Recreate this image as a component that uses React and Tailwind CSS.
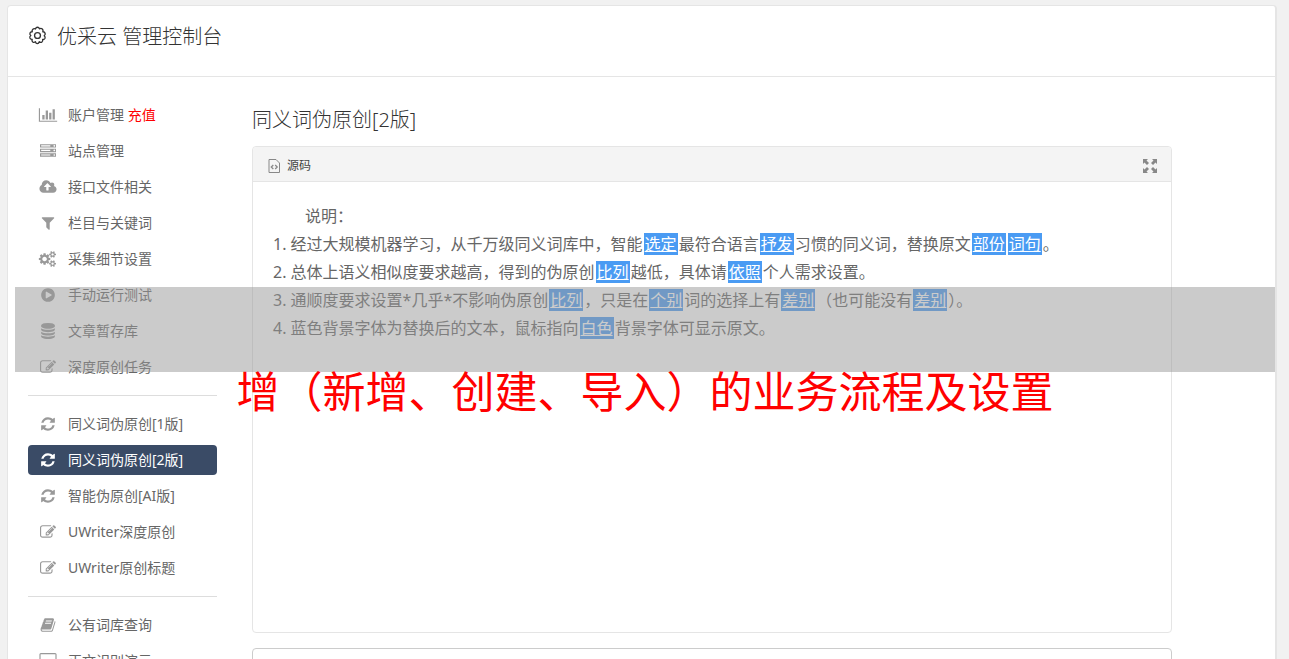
import React from 'react';

// Icon outlines, drawn on a 1792 unit em
const icons = {
  chart: { box: '0 0 2048 1792', d: 'M640 896v512h-256v-512h256zm384-512v1024h-256v-1024h256zm1024 1152v128h-2048v-1536h128v1408h1920zm-640-896v768h-256v-768h256zm384-384v1152h-256v-1152h256z' },
  server: { box: '0 0 1792 1792', d: 'M128 1408h1024v-128h-1024v128zm0-512h1024v-128h-1024v128zm1568 448q0-40-28-68t-68-28-68 28-28 68 28 68 68 28 68-28 28-68zm-1568-960h1024v-128h-1024v128zm1568 448q0-40-28-68t-68-28-68 28-28 68 28 68 68 28 68-28 28-68zm0-512q0-40-28-68t-68-28-68 28-28 68 28 68 68 28 68-28 28-68zm96 832v384h-1792v-384h1792zm0-512v384h-1792v-384h1792zm0-512v384h-1792v-384h1792z' },
  cloud: { box: '-64 0 1920 1792', d: 'M1216 864q0-14-9-23l-352-352q-9-9-23-9t-23 9l-351 351q-10 12-10 24 0 14 9 23t23 9h224v352q0 13 9.5 22.5t22.5 9.5h192q13 0 22.5-9.5t9.5-22.5v-352h224q13 0 22.5-9.5t9.5-22.5zm640 288q0 159-112.5 271.5t-271.5 112.5h-1088q-185 0-316.5-131.5t-131.5-316.5q0-130 70-240t188-165q-2-30-2-43 0-212 150-362t362-150q156 0 285.5 87t188.5 231q71-62 166-62 106 0 181 75t75 181q0 76-41 138 130 31 213.5 135.5t83.5 238.5z' },
  filter: { box: '0 0 1792 1792', d: 'M1595 295q17 41-14 70l-493 493v742q0 42-39 59-13 5-25 5-27 0-45-19l-256-256q-19-19-19-45v-486l-493-493q-31-29-14-70 17-39 59-39h1280q42 0 59 39z' },
  cogs: { box: '0 0 1920 1792', d: 'M832 896q0-106-75-181t-181-75-181 75-75 181 75 181 181 75 181-75 75-181zm768 512q0-52-38-90t-90-38-90 38-38 90q0 53 37.5 90.5t90.5 37.5 90.5-37.5 37.5-90.5zm0-1024q0-52-38-90t-90-38-90 38-38 90q0 53 37.5 90.5t90.5 37.5 90.5-37.5 37.5-90.5zm-384 421v185q0 10-7 19.5t-16 10.5l-155 24q-11 35-32 76 34 48 90 115 7 11 7 20 0 12-7 19-23 30-82.5 89.5t-78.5 59.5q-11 0-21-7l-115-90q-37 19-77 31-11 108-23 155-7 24-30 24h-186q-11 0-20-7.5t-10-17.5l-23-153q-34-10-75-31l-118 89q-7 7-20 7-11 0-21-8-144-133-144-160 0-9 7-19 10-14 41-53t47-61q-23-44-35-82l-152-24q-10-1-17-9.5t-7-19.5v-185q0-10 7-19.5t16-10.5l155-24q11-35 32-76-34-48-90-115-7-11-7-20 0-12 7-20 22-30 82-89t79-59q11 0 21 7l115 90q34-18 77-32 11-108 23-154 7-24 30-24h186q11 0 20 7.5t10 17.5l23 153q34 10 75 31l118-89q8-7 20-7 11 0 21 8 144 133 144 160 0 8-7 19-12 16-42 54t-45 60q23 48 34 82l152 23q10 2 17 10.5t7 19.5zm640 533v140q0 16-149 31-12 27-30 52 51 113 51 138 0 4-4 7-122 71-124 71-8 0-46-47t-52-68q-20 2-30 2t-30-2q-14 21-52 68t-46 47q-2 0-124-71-4-3-4-7 0-25 51-138-18-25-30-52-149-15-149-31v-140q0-16 149-31 13-29 30-52-51-113-51-138 0-4 4-7 4-2 35-20t59-34 30-16q8 0 46 46.5t52 67.5q20-2 30-2t30 2q51-71 92-112l6-2q4 0 124 70 4 3 4 7 0 25-51 138 17 23 30 52 149 15 149 31zm0-1024v140q0 16-149 31-12 27-30 52 51 113 51 138 0 4-4 7-122 71-124 71-8 0-46-47t-52-68q-20 2-30 2t-30-2q-14 21-52 68t-46 47q-2 0-124-71-4-3-4-7 0-25 51-138-18-25-30-52-149-15-149-31v-140q0-16 149-31 13-29 30-52-51-113-51-138 0-4 4-7 4-2 35-20t59-34 30-16q8 0 46 46.5t52 67.5q20-2 30-2t30 2q51-71 92-112l6-2q4 0 124 70 4 3 4 7 0 25-51 138 17 23 30 52 149 15 149 31z' },
  play: { box: '0 0 1792 1792', d: 'M896 128q209 0 385.5 103t279.5 279.5 103 385.5-103 385.5-279.5 279.5-385.5 103-385.5-103-279.5-279.5-103-385.5 103-385.5 279.5-279.5 385.5-103zm384 823q32-18 32-55t-32-55l-544-320q-31-19-64-1-32 19-32 56v640q0 37 32 56 16 8 32 8 17 0 32-9z' },
  database: { box: '0 0 1792 1792', d: 'M896 768q237 0 443-43t325-127v170q0 69-103 128t-280 93.5-385 34.5-385-34.5-280-93.5-103-128v-170q119 84 325 127t443 43zm0 768q237 0 443-43t325-127v170q0 69-103 128t-280 93.5-385 34.5-385-34.5-280-93.5-103-128v-170q119 84 325 127t443 43zm0-384q237 0 443-43t325-127v170q0 69-103 128t-280 93.5-385 34.5-385-34.5-280-93.5-103-128v-170q119 84 325 127t443 43zm0-1152q208 0 385 34.5t280 93.5 103 128v128q0 69-103 128t-280 93.5-385 34.5-385-34.5-280-93.5-103-128v-128q0-69 103-128t280-93.5 385-34.5z' },
  edit: { box: '0 0 1792 1792', d: 'M888 1184l116-116-152-152-116 116v56h96v96h56zm440-720q-16-16-33 1l-350 350q-17 17-1 33t33-1l350-350q17-17 1-33zm80 594v190q0 119-84.5 203.5t-203.5 84.5h-832q-119 0-203.5-84.5t-84.5-203.5v-832q0-119 84.5-203.5t203.5-84.5h832q63 0 117 25 15 7 18 23 3 17-9 29l-49 49q-14 14-32 8-23-6-45-6h-832q-66 0-113 47t-47 113v832q0 66 47 113t113 47h832q66 0 113-47t47-113v-126q0-13 9-22l64-64q15-15 35-7t20 29zm-96-738l288 288-672 672h-288v-288zm444 132l-92 92-288-288 92-92q28-28 68-28t68 28l152 152q28 28 28 68t-28 68z' },
  refresh: { box: '0 0 1792 1792', d: 'M1639 1056q0 5-1 7-64 268-268 434.5t-478 166.5q-146 0-282.5-55t-243.5-157l-129 129q-19 19-45 19t-45-19-19-45v-448q0-26 19-45t45-19h448q26 0 45 19t19 45-19 45l-137 137q71 66 161 102t187 36q134 0 250-65t186-179q11-17 53-117 8-23 30-23h192q13 0 22.5 9.5t9.5 22.5zm25-800v448q0 26-19 45t-45 19h-448q-26 0-45-19t-19-45 19-45l138-138q-148-137-349-137-134 0-250 65t-186 179q-11 17-53 117-8 23-30 23h-199q-13 0-22.5-9.5t-9.5-22.5v-7q65-268 270-434.5t480-166.5q146 0 284 55.5t245 156.5l130-129q19-19 45-19t45 19 19 45z' },
  book: { box: '0 0 1792 1792', d: 'M1703 478q40 57 18 129l-275 906q-19 64-76.5 107.5t-122.5 43.5h-923q-77 0-148.5-53.5t-99.5-131.5q-24-67-2-127 0-4 3-27t4-37q1-8-3-21.5t-3-19.5q2-11 8-21t16.5-23.5 16.5-23.5q23-38 45-91.5t30-91.5q3-10 .5-30t-.5-28q3-11 17-28t17-23q21-36 42-92t25-90q1-9-2.5-32t.5-28q4-13 22-30.5t22-22.5q19-26 42.5-84.5t27.5-96.5q1-8-3-25.5t-2-26.5q2-8 9-18t18-23 17-21q8-12 16.5-30.5t15-35 16-36 19.5-32 26.5-23.5 36-11.5 47.5 5.5l-1 3q38-9 51-9h761q74 0 114 56t18 130l-274 906q-36 119-71.5 153.5t-128.5 34.5h-869q-27 0-38 15-11 16-1 43 24 70 144 70h923q29 0 56-15.5t35-41.5l300-987q7-22 5-57 38 15 59 43zm-1064 2q-4 13 2 22.5t20 9.5h608q13 0 25.5-9.5t16.5-22.5l21-64q4-13-2-22.5t-20-9.5h-608q-13 0-25.5 9.5t-16.5 22.5zm-83 256q-4 13 2 22.5t20 9.5h608q13 0 25.5-9.5t16.5-22.5l21-64q4-13-2-22.5t-20-9.5h-608q-13 0-25.5 9.5t-16.5 22.5z' },
  desktop: { box: '-64 0 1920 1792', d: 'M1728 992v-832q0-13-9.5-22.5t-22.5-9.5h-1600q-13 0-22.5 9.5t-9.5 22.5v832q0 13 9.5 22.5t22.5 9.5h1600q13 0 22.5-9.5t9.5-22.5zm128-832v1088q0 66-47 113t-113 47h-544q0 37 16 77.5t32 71 16 43.5q0 26-19 45t-45 19h-512q-26 0-45-19t-19-45q0-14 16-44t32-70 16-78h-544q-66 0-113-47t-47-113v-1088q0-66 47-113t113-47h1600q66 0 113 47t47 113z' },
};

const menu = [
  [
    { icon: 'chart', label: '账户管理', extra: '充值' },
    { icon: 'server', label: '站点管理' },
    { icon: 'cloud', label: '接口文件相关' },
    { icon: 'filter', label: '栏目与关键词' },
    { icon: 'cogs', label: '采集细节设置' },
    { icon: 'play', label: '手动运行测试' },
    { icon: 'database', label: '文章暂存库' },
    { icon: 'edit', label: '深度原创任务' },
  ],
  [
    { icon: 'refresh', label: '同义词伪原创[1版]' },
    { icon: 'refresh', label: '同义词伪原创[2版]', active: true },
    { icon: 'refresh', label: '智能伪原创[AI版]' },
    { icon: 'edit', label: 'UWriter深度原创' },
    { icon: 'edit', label: 'UWriter原创标题' },
  ],
  [
    { icon: 'book', label: '公有词库查询' },
    { icon: 'desktop', label: '正文识别演示' },
  ],
];

const Icon = ({ name }) => (
  <svg className="h-4 w-5 shrink-0 fill-current" viewBox={icons[name].box} aria-hidden="true">
    <path d={icons[name].d} />
  </svg>
);

const MenuItem = ({ item }) => (
  <li>
    <a
      href="#"
      className={`flex h-[30px] items-center gap-[10px] rounded pl-[10px] text-sm ${item.active ? 'bg-[#3a4b66] text-white' : 'text-[#666]'}`}
    >
      <span className={item.active ? 'text-white' : 'text-[#999]'}>
        <Icon name={item.icon} />
      </span>
      <span>
        {item.label}
        {item.extra && <span className="text-[#f00]"> {item.extra}</span>}
      </span>
    </a>
  </li>
);

// Replaced word
const Mark = ({ children }) => (
  <span className="mx-px bg-[#4a9bf3] px-px text-white underline">{children}</span>
);

const App = () => {
  return (
    <div className="relative h-screen overflow-hidden bg-[#f1f1f1] pt-[5px] pr-3 pl-[7px] font-['Noto_Sans','Noto_Sans_CJK_SC',sans-serif] text-[#333]" lang="zh-CN">
      <div className="min-h-full rounded-t border border-r-2 border-[#e5e5e5] bg-white">
        <header className="flex h-[71px] items-center border-b border-[#e5e5e5] pb-2 pl-5">
          <svg className="mb-1 h-[19px] w-[19px]" viewBox="0 0 20 20" fill="none" stroke="currentColor" strokeLinejoin="round" aria-hidden="true">
            <path strokeWidth="1.4" d="M10 1.3 Q11.6 1.3 12.1 3 Q13.6 2 15.1 3.2 Q16.3 4.4 15.6 6.1 Q17.4 6 18 7.6 Q18.5 9.2 17 10.2 Q18.5 11.3 17.9 12.9 Q17.2 14.4 15.4 14.2 Q15.9 15.9 14.6 16.9 Q13.1 17.8 11.9 16.6 Q11.3 18.5 9.8 18.5 Q8.3 18.4 7.9 16.6 Q6.4 17.8 5 16.8 Q3.7 15.7 4.4 14 Q2.6 14.2 2 12.6 Q1.5 11 3 10 Q1.5 9 2.1 7.4 Q2.8 5.9 4.5 6.1 Q3.9 4.4 5.1 3.3 Q6.4 2.2 7.9 3.1 Q8.4 1.3 10 1.3 Z" />
            <circle cx="10" cy="10" r="3.1" strokeWidth="1.4" />
          </svg>
          <h1 className="ml-[10px] text-xl font-light">优采云 管理控制台</h1>
        </header>

        <div className="flex">
          <nav className="ml-5 w-[189px] shrink-0 pt-[23px]">
            {menu.map((group, i) => (
              <ul key={i} className={`flex flex-col gap-[6px] ${i > 0 ? 'mt-[13px] border-t border-[#ddd] pt-[13px]' : ''}`}>
                {group.map((item) => (
                  <MenuItem key={item.label} item={item} />
                ))}
              </ul>
            ))}
          </nav>

          <main className="mr-[103px] ml-[35px] min-w-0 flex-1 pt-7">
            <h2 className="text-xl font-light leading-[30px]">同义词伪原创[2版]</h2>

            {/* Editor */}
            <section className="mt-[11px] h-[487px] rounded border border-[#e5e5e5]">
              <div className="flex h-[35px] items-center justify-between rounded-t border-b border-[#e5e5e5] bg-[#f4f4f4] pt-[3px] pr-[14px] pl-[15px]">
                <button type="button" className="flex items-center gap-[7px] text-xs text-[#444]">
                  <svg className="h-[14px] w-3" viewBox="0 0 12 14" fill="none" stroke="#888" aria-hidden="true">
                    <path d="M1 .5 H8 L11.5 4 V13.5 H1 Z" />
                    <path strokeWidth="1.3" d="M5.3 6 L3.3 8 L5.3 10 M7.2 6 L9.2 8 L7.2 10" />
                  </svg>
                  源码
                </button>
                <button type="button" aria-label="全屏" className="text-[#888]">
                  <svg className="h-[14px] w-[14px] fill-current" viewBox="0 0 14 14">
                    <path d="M0 0h5L3.5 1.5 6 4 4 6 1.5 3.5 0 5zM14 0v5l-1.5-1.5L10 6 8 4l2.5-2.5L9 0zM0 14V9l1.5 1.5L4 8l2 2-2.5 2.5L5 14zM14 14H9l1.5-1.5L8 10l2-2 2.5 2.5L14 9z" />
                  </svg>
                </button>
              </div>
              <div className="px-5 pt-5 text-base leading-7 text-[#666]">
                <p className="indent-8">说明：</p>
                <p>1. 经过大规模机器学习，从千万级同义词库中，智能<Mark>选定</Mark>最符合语言<Mark>抒发</Mark>习惯的同义词，替换原文<Mark>部份</Mark><Mark>词句</Mark>。</p>
                <p>2. 总体上语义相似度要求越高，得到的伪原创<Mark>比列</Mark>越低，具体请<Mark>依照</Mark>个人需求设置。</p>
                <p>3. 通顺度要求设置*几乎*不影响伪原创<Mark>比列</Mark>，只是在<Mark>个别</Mark>词的选择上有<Mark>差别</Mark>（也可能没有<Mark>差别</Mark>）。</p>
                <p>4. 蓝色背景字体为替换后的文本，鼠标指向<Mark>白色</Mark>背景字体可显示原文。</p>
              </div>
            </section>

            <section className="mt-[15px] h-20 rounded border border-[#ccc]" />
          </main>
        </div>
      </div>

      {/* Caption over the page */}
      <div className="pointer-events-none absolute inset-x-0 top-[287px] pr-[14px] pl-[15px]">
        <div className="h-[85px] bg-[#979797]/50" />
        <p className="text-center text-[43px] leading-10 text-[#f00]">增（新增、创建、导入）的业务流程及设置</p>
      </div>
    </div>
  );
};

export default App;
